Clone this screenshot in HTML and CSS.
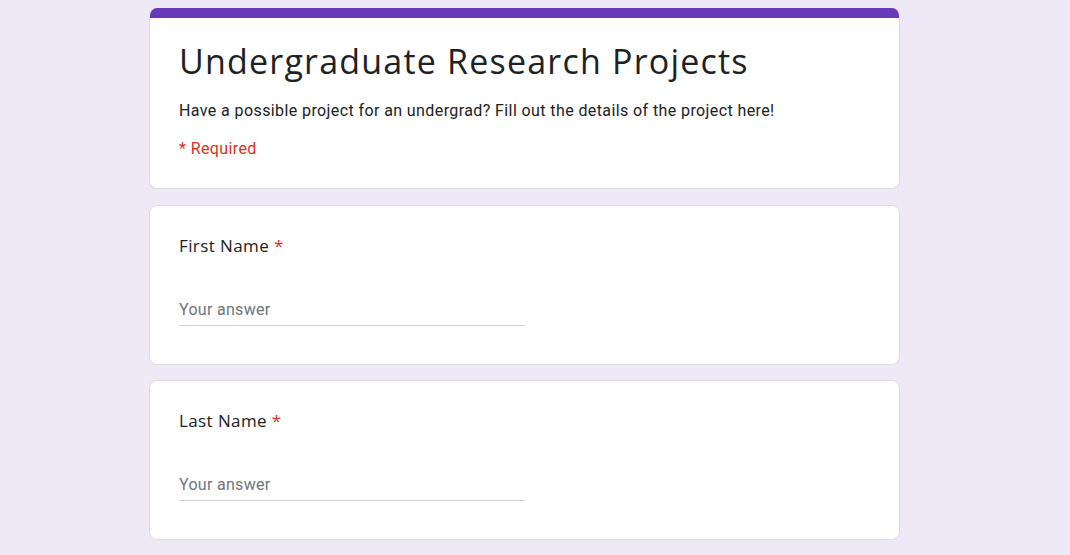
FILE: index.html
```html
<!DOCTYPE html>
<html>
<head>
<meta charset="utf-8">
<link rel="stylesheet" href="styles.css">
</head>
<body>
<div class="form">
  <div class="card header-card">
    <div class="accent"></div>
    <div class="header-body">
      <h1 class="title">Undergraduate Research Projects</h1>
      <p class="desc">Have a possible project for an undergrad? Fill out the details of the project here!</p>
      <p class="required">* Required</p>
    </div>
  </div>
  <div class="card question">
    <div class="label">First Name <span class="star">*</span></div>
    <div class="answer"><span class="placeholder">Your answer</span></div>
  </div>
  <div class="card question">
    <div class="label">Last Name <span class="star">*</span></div>
    <div class="answer"><span class="placeholder">Your answer</span></div>
  </div>
</div>
</body>
</html>
```

FILE: styles.css
```css
html, body {
  margin: 0;
  padding: 0;
  background: #efe9f7;
  height: 100%;
}
body {
  font-family: Roboto, "Liberation Sans", Arial, sans-serif;
  color: #202124;
}
.form {
  width: 751px;
  margin-left: 149px;
  padding-top: 8px;
  display: flex;
  flex-direction: column;
  gap: 16px;
}
.card {
  background: #fff;
  border: 1px solid #dadce0;
  border-radius: 8px;
  box-sizing: border-box;
}
.header-card {
  border-top: none;
  overflow: hidden;
  height: 181px;
}
.accent {
  height: 10px;
  background: #673ab7;
}
.header-body {
  padding: 21px 28px 0 29px;
}
.title {
  margin: 0;
  font-family: "Open Sans", Roboto, sans-serif;
  font-weight: 400;
  font-size: 34px;
  line-height: 44px;
  letter-spacing: 1.2px;
  color: #202124;
}
.desc {
  margin: 17px 0 0;
  font-size: 16px;
  line-height: 22px;
  letter-spacing: 0.4px;
  color: #202124;
}
.required {
  margin: 16px 0 0;
  font-size: 16px;
  line-height: 22px;
  letter-spacing: 0.4px;
  color: #d93025;
}
.question {
  height: 160px;
  padding: 28px 28px 0 29px;
}
.question + .question {
  margin-top: -1px;
}
.label {
  font-family: "Open Sans", Roboto, sans-serif;
  font-size: 17px;
  line-height: 24px;
  letter-spacing: 0.4px;
  color: #202124;
}
.star {
  color: #d93025;
}
.answer {
  margin-top: 42px;
  width: 346px;
  border-bottom: 1px solid #d4d4d4;
  padding-bottom: 5px;
}
.placeholder {
  font-size: 16px;
  line-height: 20px;
  color: #70757a;
  letter-spacing: 0.3px;
}
```
